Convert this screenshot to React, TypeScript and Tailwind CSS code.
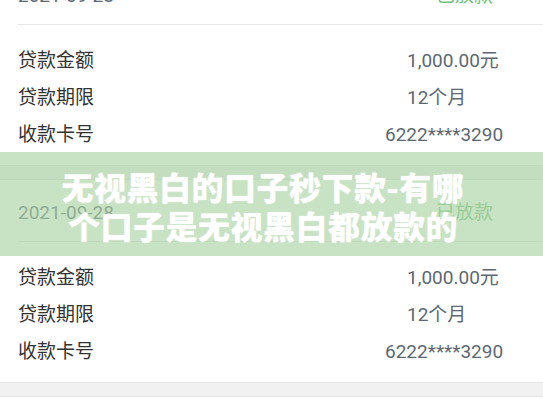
import React from "react";

const loans = [
  { date: "2021-09-28", status: "已放款", amount: "1,000.00元", term: "12个月", card: "6222****3290" },
  { date: "2021-09-28", status: "已放款", amount: "1,000.00元", term: "12个月", card: "6222****3290" },
];

function Row({ label, value, shift }: { label: string; value: string; shift?: boolean }) {
  return (
    <div className="flex items-center h-[37px] pl-[18px]">
      <span className="flex-1 text-[19px] text-[#333333]">{label}</span>
      <span className={`text-[19px] text-[#5d6872] whitespace-nowrap ${shift ? "w-[158px]" : "w-[136px]"}`}>
        {value}
      </span>
    </div>
  );
}

function LoanCard({ loan }: { loan: (typeof loans)[number] }) {
  return (
    <div className="bg-white">
      <div className="flex items-center justify-between h-[61px] pt-[5px] pl-[18px] pr-[50px]">
        <span className="text-[19px] text-[#5d6872]">{loan.date}</span>
        <span className="text-[19px] text-[#72bf80]">{loan.status}</span>
      </div>
      <div className="ml-[18px] h-px bg-[#e6e6e6]" />
      <div className="pt-[18px] pb-[11px]">
        <Row label="贷款金额" value={loan.amount} />
        <Row label="贷款期限" value={loan.term} />
        <Row label="收款卡号" value={loan.card} shift />
      </div>
    </div>
  );
}

export default function App() {
  return (
    <div
      className="relative w-[543px] h-[408px] overflow-hidden bg-white"
      style={{ fontFamily: 'Roboto, "Noto Sans CJK SC", sans-serif' }}
    >
      <div className="-mt-[37px]">
        {loans.map((loan, i) => (
          <div key={i}>
            <LoanCard loan={loan} />
            <div className="h-[15px] bg-[#f1f1f1] border-y border-[#e4e4e4]" />
          </div>
        ))}
        <div className="h-[40px] bg-white" />
      </div>

      {/* title banner laid over the list */}
      <div className="absolute left-0 right-0 top-[152px] h-[104px] bg-[rgba(170,210,164,0.65)] flex items-center justify-center pr-[17px] pt-[4px]">
        <h1
          className="text-center text-white font-black text-[32px] leading-[39px] tracking-[0.5px] [text-shadow:0_0_2px_rgba(255,255,255,0.4)]"
          style={{ fontFamily: '"Noto Sans CJK SC", sans-serif' }}
        >
          无视黑白的口子秒下款-有哪
          <br />
          个口子是无视黑白都放款的
        </h1>
      </div>
    </div>
  );
}
